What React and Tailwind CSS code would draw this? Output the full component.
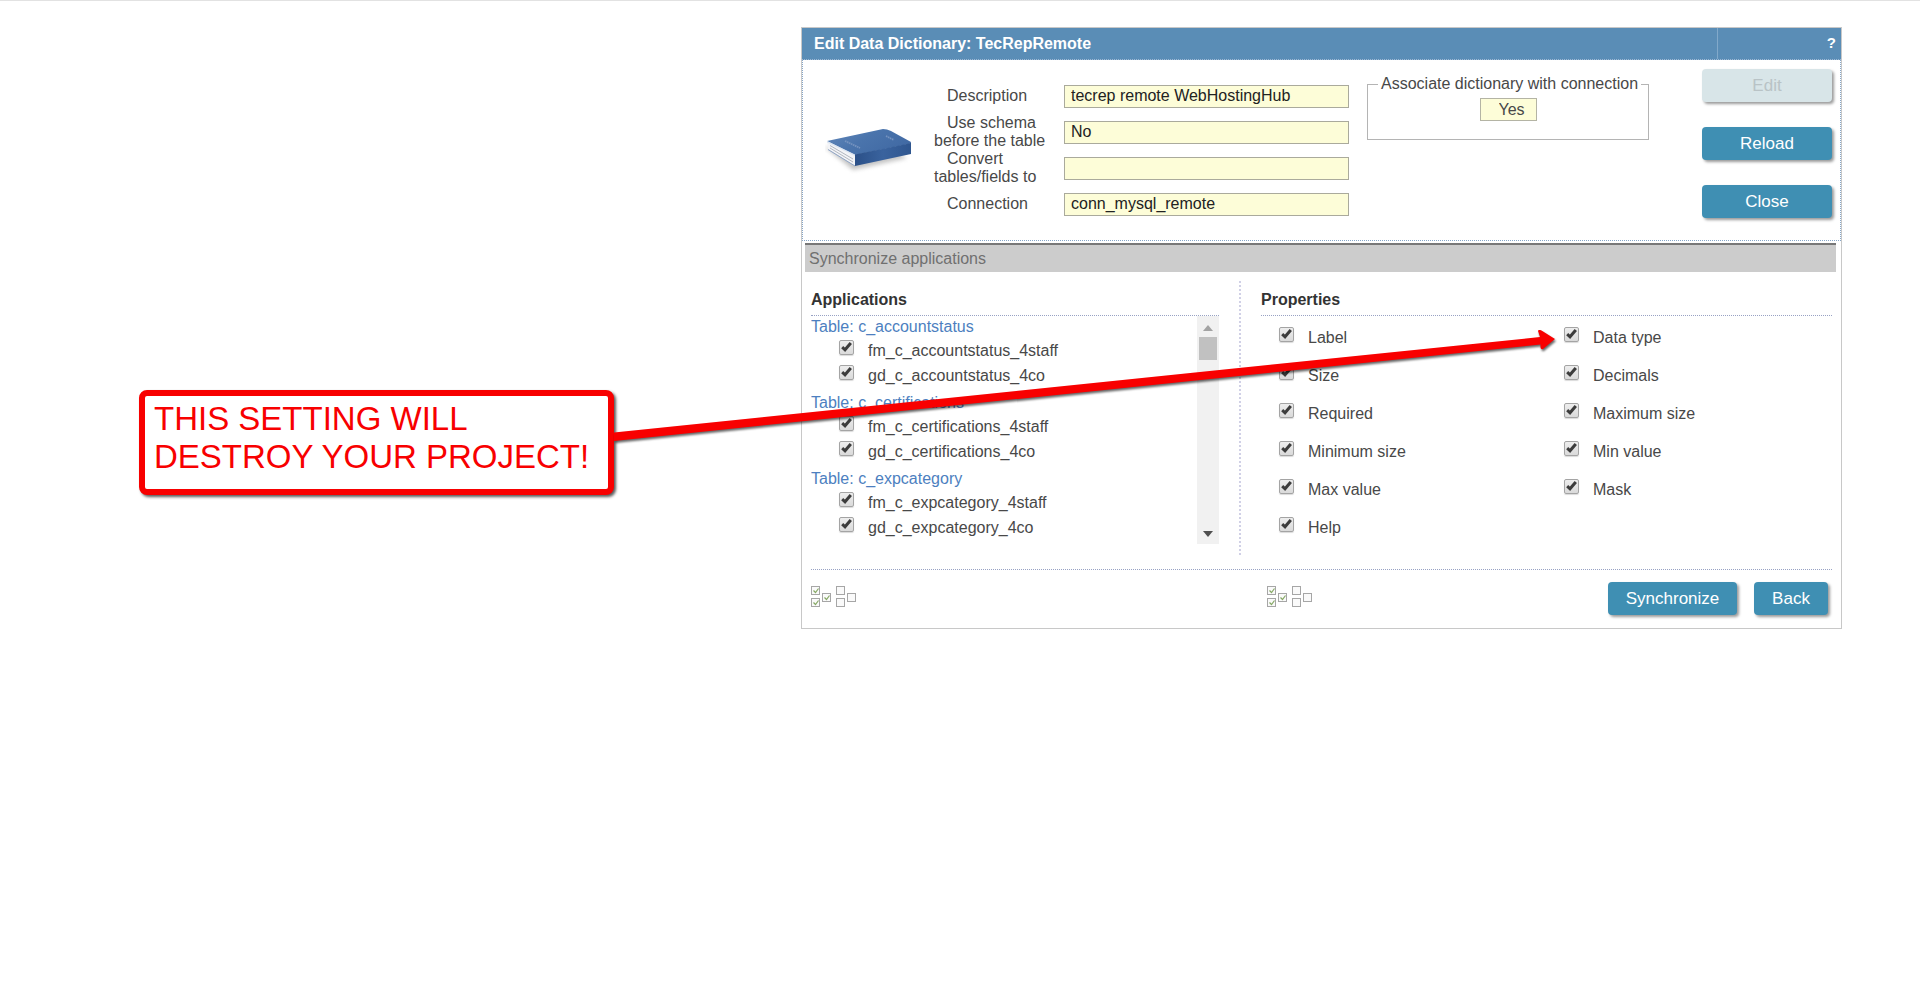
import React from "react";

const FIELDS = [
  { id: "description", label: "Description", value: "tecrep remote WebHostingHub" },
  { id: "schema", label: "Use schema before the table", value: "No" },
  { id: "convert", label: "Convert tables/fields to", value: "" },
  { id: "connection", label: "Connection", value: "conn_mysql_remote" },
];

const TABLES = [
  { name: "c_accountstatus", apps: ["fm_c_accountstatus_4staff", "gd_c_accountstatus_4co"] },
  { name: "c_certifications", apps: ["fm_c_certifications_4staff", "gd_c_certifications_4co"] },
  { name: "c_expcategory", apps: ["fm_c_expcategory_4staff", "gd_c_expcategory_4co"] },
];

const PROPERTIES = [
  "Label",
  "Data type",
  "Size",
  "Decimals",
  "Required",
  "Maximum size",
  "Minimum size",
  "Min value",
  "Max value",
  "Mask",
  "Help",
];

function CheckItem({ label }) {
  return (
    <label className="flex items-start gap-[14px]">
      <span className="relative block size-[15px] shrink-0">
        <input
          type="checkbox"
          defaultChecked
          className="peer block size-[15px] appearance-none rounded-[2px] border border-[#a4a4a4] bg-linear-to-b from-[#ededed] to-[#dadada] shadow-[0_1px_1px_rgba(0,0,0,0.15)]"
        />
        <svg
          viewBox="0 0 15 15"
          className="pointer-events-none absolute inset-0 hidden size-[15px] peer-checked:block"
          fill="none"
          stroke="#3c3c3c"
          strokeWidth="3"
        >
          <path d="M3.2 7.2 L6 9.8 L11.8 3" />
        </svg>
      </span>
      <span className="pt-[2px] leading-[18px]">{label}</span>
    </label>
  );
}

function ActionButton({ children, className = "", disabled = false }) {
  const tone = disabled ? "bg-[#d8e5e8] text-[#b9c3c6]" : "bg-[#3f8fb3] text-white";
  return (
    <button
      type="button"
      disabled={disabled}
      className={`h-[33px] rounded-[4px] text-[17px] shadow-[2px_2px_3px_rgba(0,0,0,0.4)] ${tone} ${className}`}
    >
      {children}
    </button>
  );
}

function BookIcon() {
  return (
    <svg viewBox="0 0 90 52" className="h-[52px] w-[90px]" aria-hidden="true">
      <defs>
        <linearGradient id="cover" x1="0" y1="0" x2="1" y2="0.5">
          <stop offset="0" stopColor="#6389bb" />
          <stop offset="0.5" stopColor="#4a74ac" />
          <stop offset="1" stopColor="#416aa4" />
        </linearGradient>
        <linearGradient id="spine" x1="0" y1="0" x2="1" y2="0">
          <stop offset="0" stopColor="#2b5088" />
          <stop offset="0.5" stopColor="#3a639e" />
          <stop offset="1" stopColor="#2f568f" />
        </linearGradient>
        <filter id="soft" x="-20%" y="-20%" width="140%" height="160%">
          <feGaussianBlur stdDeviation="2" />
        </filter>
      </defs>
      <path d="M0 24 L28 47 L82 35 L70 28 Z" fill="#888" opacity="0.5" filter="url(#soft)" />
      <path d="M2 18 L30 31 L30 43 L3 26 Z" fill="#f3f4f7" />
      <path d="M5 22.5 L28 36 M5 25 L28 39" stroke="#a9afb9" strokeWidth="0.9" />
      <path d="M2 18 L58 6 Q62 6 66 8 L86 19 Q86 20.5 84 21 L30 32 Z" fill="url(#cover)" />
      <path d="M30 31.5 L84 20.5 L86 19.5 L86 31 L30 43 Z" fill="url(#spine)" />
      <path d="M2 18 L30 31.5 L30 33 L2 19.5 Z" fill="#dbe4f0" />
      <path d="M3 26.5 L30 43" stroke="#8fa5c6" strokeWidth="1" />
      <path d="M20 18 L35 25 M61 13 L69 17" stroke="#7593bf" strokeWidth="1.8" strokeDasharray="1.6 0.6" />
    </svg>
  );
}

const BOXES = [
  [0, 0],
  [0, 12],
  [11, 7],
];

function BoxesIcon({ checked }) {
  return (
    <svg viewBox="0 0 20 22" className="h-[22px] w-[20px]" fill="none" aria-hidden="true">
      {BOXES.map(([x, y]) => (
        <g key={`${x}-${y}`}>
          <rect x={x + 0.5} y={y + 0.5} width="8" height="8" fill="#fafafa" stroke="#a6a6a6" />
          {checked && (
            <path d={`M${x + 2.5} ${y + 4.5} l2 2 l3 -4`} stroke="#86a865" strokeWidth="1.2" />
          )}
        </g>
      ))}
    </svg>
  );
}

function SelectionTools({ target }) {
  return (
    <div className="flex gap-[5px]">
      <button type="button" aria-label={`Check all ${target}`}>
        <BoxesIcon checked />
      </button>
      <button type="button" aria-label={`Uncheck all ${target}`}>
        <BoxesIcon />
      </button>
    </div>
  );
}

function Callout() {
  return (
    <aside className="relative z-10 mt-[363px] mr-[187px] ml-[139px] h-[105px] w-[475px] shrink-0 rounded-[8px] border-[6px] border-[#f80000] bg-white px-[9px] pt-[4px] text-[33px] leading-[38px] text-[#f80000] shadow-[2px_2px_3px_rgba(0,0,0,0.65)]">
      THIS SETTING WILL
      <br />
      DESTROY YOUR PROJECT!
      <svg
        viewBox="0 0 950 120"
        className="pointer-events-none absolute top-[-66px] left-[467px] h-[120px] w-[950px] drop-shadow-[1px_2px_1px_rgba(0,0,0,0.6)]"
        aria-hidden="true"
      >
        <path
          d="M2 102.5 L928 7 L926 1 Q926.5 -1 929.5 0.5 L943 9 L931 19 Q928 20 928.5 14.5 L2 111 Z"
          fill="#f80000"
        />
      </svg>
    </aside>
  );
}

function ConnectionForm() {
  return (
    <section className="flex items-start border border-t-0 border-dotted border-[#86a6c8] pr-[8px] pb-[18px]">
      <div className="mt-[63px] ml-[22px] shrink-0">
        <BookIcon />
      </div>
      <div className="mt-[18px] ml-[19px] grid shrink-0 auto-rows-[36px] grid-cols-[130px_285px] items-center">
        {FIELDS.map((f) => (
          <React.Fragment key={f.id}>
            <label htmlFor={f.id} className="w-[124px] indent-[13px] leading-[18px]">
              {f.label}
            </label>
            <input
              id={f.id}
              readOnly
              defaultValue={f.value}
              className="h-[23px] border border-[#aaaa9c] bg-[#fdfdd8] px-[6px] text-[#222]"
            />
          </React.Fragment>
        ))}
      </div>
      <fieldset className="mt-[15px] ml-[18px] h-[65px] w-[282px] shrink-0 border border-[#b4b4b4]">
        <legend className="ml-[10px] px-[3px] leading-[18px]">Associate dictionary with connection</legend>
        <input
          aria-label="Associate dictionary with connection"
          readOnly
          defaultValue="Yes"
          className="mx-auto mt-[5px] block h-[23px] w-[57px] border border-[#b4b4a4] bg-[#fdfdd8] pl-[18px]"
        />
      </fieldset>
      <div className="mt-[9px] ml-auto flex flex-col gap-[25px]">
        <ActionButton disabled className="w-[130px]">Edit</ActionButton>
        <ActionButton className="w-[130px]">Reload</ActionButton>
        <ActionButton className="w-[130px]">Close</ActionButton>
      </div>
    </section>
  );
}

function Scrollbar() {
  return (
    <div className="flex w-[22px] shrink-0 flex-col items-center bg-[#f1f1f1]">
      <button type="button" aria-label="Scroll up" className="flex h-[21px] w-full items-center justify-center pt-[3px]">
        <svg viewBox="0 0 10 6" className="h-[6px] w-[10px]" fill="#a3a3a3">
          <path d="M0 6 L5 0 L10 6 Z" />
        </svg>
      </button>
      <div className="h-[23px] w-[18px] bg-[#c1c1c1]" />
      <button type="button" aria-label="Scroll down" className="mt-auto flex h-[21px] w-full items-center justify-center">
        <svg viewBox="0 0 10 6" className="h-[6px] w-[10px]" fill="#505050">
          <path d="M0 0 L5 6 L10 0 Z" />
        </svg>
      </button>
    </div>
  );
}

export default function App() {
  return (
    <main className="min-h-screen border-t border-[#e2e2e2] bg-white font-['Liberation_Sans',Arial,sans-serif] text-[16px] text-[#484848]">
      <div className="flex items-start pt-[26px] pr-[78px]">
        <Callout />
        <div className="min-w-[1041px] flex-1 border border-[#c8c8c8]">
          <header className="flex h-[32px] items-center border-b border-dotted border-[#9db8d4] bg-[#5a8db6] font-bold text-white">
            <h1 className="flex-1 pl-[12px]">Edit Data Dictionary: TecRepRemote</h1>
            <div className="flex h-full w-[124px] items-center justify-end border-l border-[#82a9ca] pr-[5px] text-[15px]">
              <a href="#help">?</a>
            </div>
          </header>

          <ConnectionForm />

          <h2 className="mt-[2px] mr-[5px] ml-[3px] border-t-2 border-[#777] bg-[#ccc] py-[4px] pl-[4px] leading-[19px] text-[#707070]">
            Synchronize applications
          </h2>

          <div className="mr-[9px] ml-[9px] border-b border-dotted border-[#98a2c4] pt-[9px] pb-[14px]">
            <div className="flex">
              <section className="w-[430px] shrink-0 border-r-2 border-dotted border-[#d0d0e6] pr-[20px] pb-[10px]">
                <h3 className="border-b border-dotted border-[#98a2c4] pt-[10px] pb-[6px] leading-[18px] font-bold text-[#333]">
                  Applications
                </h3>
                <div className="flex h-[228px] overflow-hidden">
                  <div className="flex-1">
                    {TABLES.map((t) => (
                      <div key={t.name} className="h-[76px]">
                        <h4 className="pt-[2px] pb-[4px] leading-[18px] text-[#4d7fc0]">Table: {t.name}</h4>
                        <div className="flex flex-col gap-[5px] pl-[28px]">
                          {t.apps.map((a) => (
                            <CheckItem key={a} label={a} />
                          ))}
                        </div>
                      </div>
                    ))}
                  </div>
                  <Scrollbar />
                </div>
              </section>

              <section className="ml-[20px] flex-1">
                <h3 className="border-b border-dotted border-[#98a2c4] pt-[10px] pb-[6px] leading-[18px] font-bold text-[#333]">
                  Properties
                </h3>
                <div className="grid auto-rows-[38px] grid-cols-[285px_1fr] pt-[11px] pl-[18px]">
                  {PROPERTIES.map((p) => (
                    <CheckItem key={p} label={p} />
                  ))}
                </div>
              </section>
            </div>
          </div>

          <footer className="flex items-start pt-[12px] pr-[13px] pb-[13px] pl-[9px]">
            <div className="w-[456px] shrink-0 pt-[4px]">
              <SelectionTools target="applications" />
            </div>
            <div className="pt-[4px]">
              <SelectionTools target="properties" />
            </div>
            <div className="ml-auto flex gap-[17px]">
              <ActionButton className="w-[129px]">Synchronize</ActionButton>
              <ActionButton className="w-[74px]">Back</ActionButton>
            </div>
          </footer>
        </div>
      </div>
    </main>
  );
}
